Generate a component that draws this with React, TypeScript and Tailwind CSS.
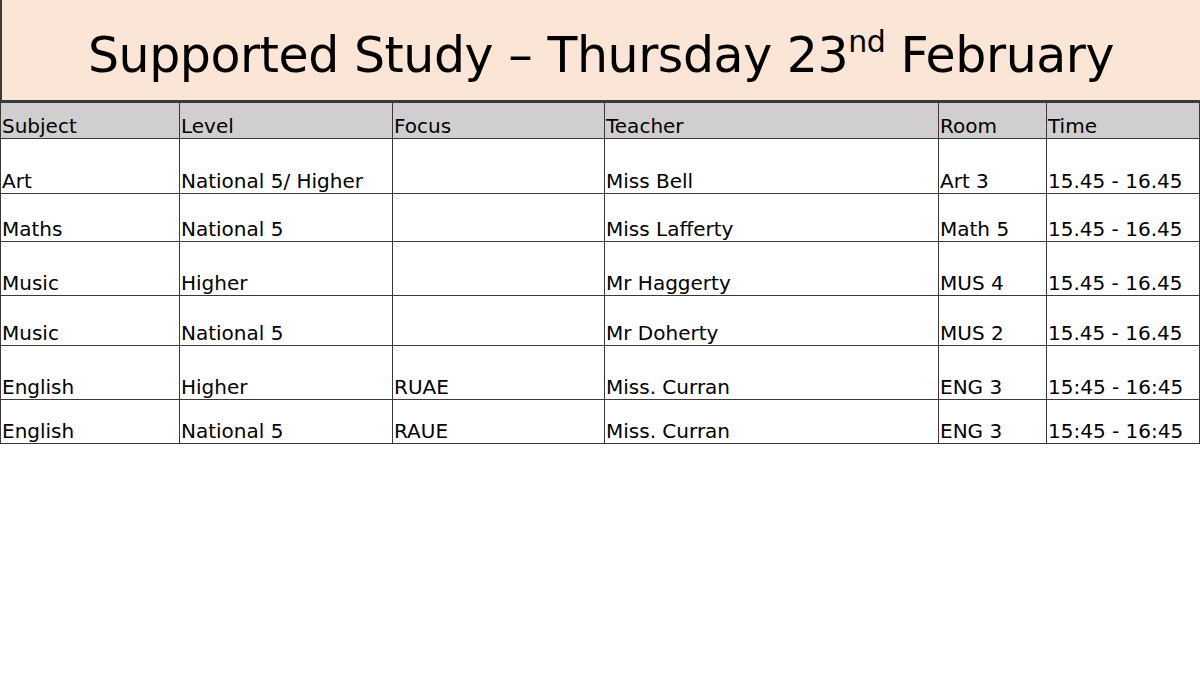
const rows = [
  { subject: 'Art', level: 'National 5/ Higher', focus: '', teacher: 'Miss Bell', room: 'Art 3', time: '15.45 - 16.45', h: 'h-[55px]' },
  { subject: 'Maths', level: 'National 5', focus: '', teacher: 'Miss Lafferty', room: 'Math 5', time: '15.45 - 16.45', h: 'h-[48px]' },
  { subject: 'Music', level: 'Higher', focus: '', teacher: 'Mr Haggerty', room: 'MUS 4', time: '15.45 - 16.45', h: 'h-[54px]' },
  { subject: 'Music', level: 'National 5', focus: '', teacher: 'Mr Doherty', room: 'MUS 2', time: '15.45 - 16.45', h: 'h-[50px]' },
  { subject: 'English', level: 'Higher', focus: 'RUAE', teacher: 'Miss. Curran', room: 'ENG 3', time: '15:45 - 16:45', h: 'h-[54px]' },
  { subject: 'English', level: 'National 5', focus: 'RAUE', teacher: 'Miss. Curran', room: 'ENG 3', time: '15:45 - 16:45', h: 'h-[44px]' },
];

const cols = ['w-[179px]', 'w-[213px]', 'w-[212px]', 'w-[334px]', 'w-[108px]', 'w-[153px]'];
const headers = ['Subject', 'Level', 'Focus', 'Teacher', 'Room', 'Time'];

export default function App() {
  return (
    <div className="w-[1200px] h-[675px] bg-white overflow-hidden text-black" style={{ fontFamily: '"DejaVu Sans", Verdana, sans-serif' }}>
      <div className="h-[102px] bg-[#fbe5d6] border-l-2 border-b-2 border-[#3a3a3a] flex items-center justify-center">
        <h1 className="text-[49px] leading-none font-normal tracking-[-0.45px] pt-[10px]">
          Supported Study – Thursday 23<sup className="text-[30px] relative top-[-20px] leading-none align-baseline">nd</sup> February
        </h1>
      </div>
      <table className="border-collapse table-fixed w-[1199px] text-[20px] leading-none">
        <thead>
          <tr className="h-[36px] bg-[#d0cece]">
            {headers.map((h, i) => (
              <th key={h} className={`${cols[i]} font-normal text-left align-bottom px-[1px] pb-[2px] border border-[#3a3a3a]`}>{h}</th>
            ))}
          </tr>
        </thead>
        <tbody>
          {rows.map((r, idx) => (
            <tr key={idx} className={r.h}>
              {[r.subject, r.level, r.focus, r.teacher, r.room, r.time].map((c, i) => (
                <td key={i} className="align-bottom text-left px-[1px] pb-[2px] border border-[#3a3a3a]">{c}</td>
              ))}
            </tr>
          ))}
        </tbody>
      </table>
    </div>
  );
}
